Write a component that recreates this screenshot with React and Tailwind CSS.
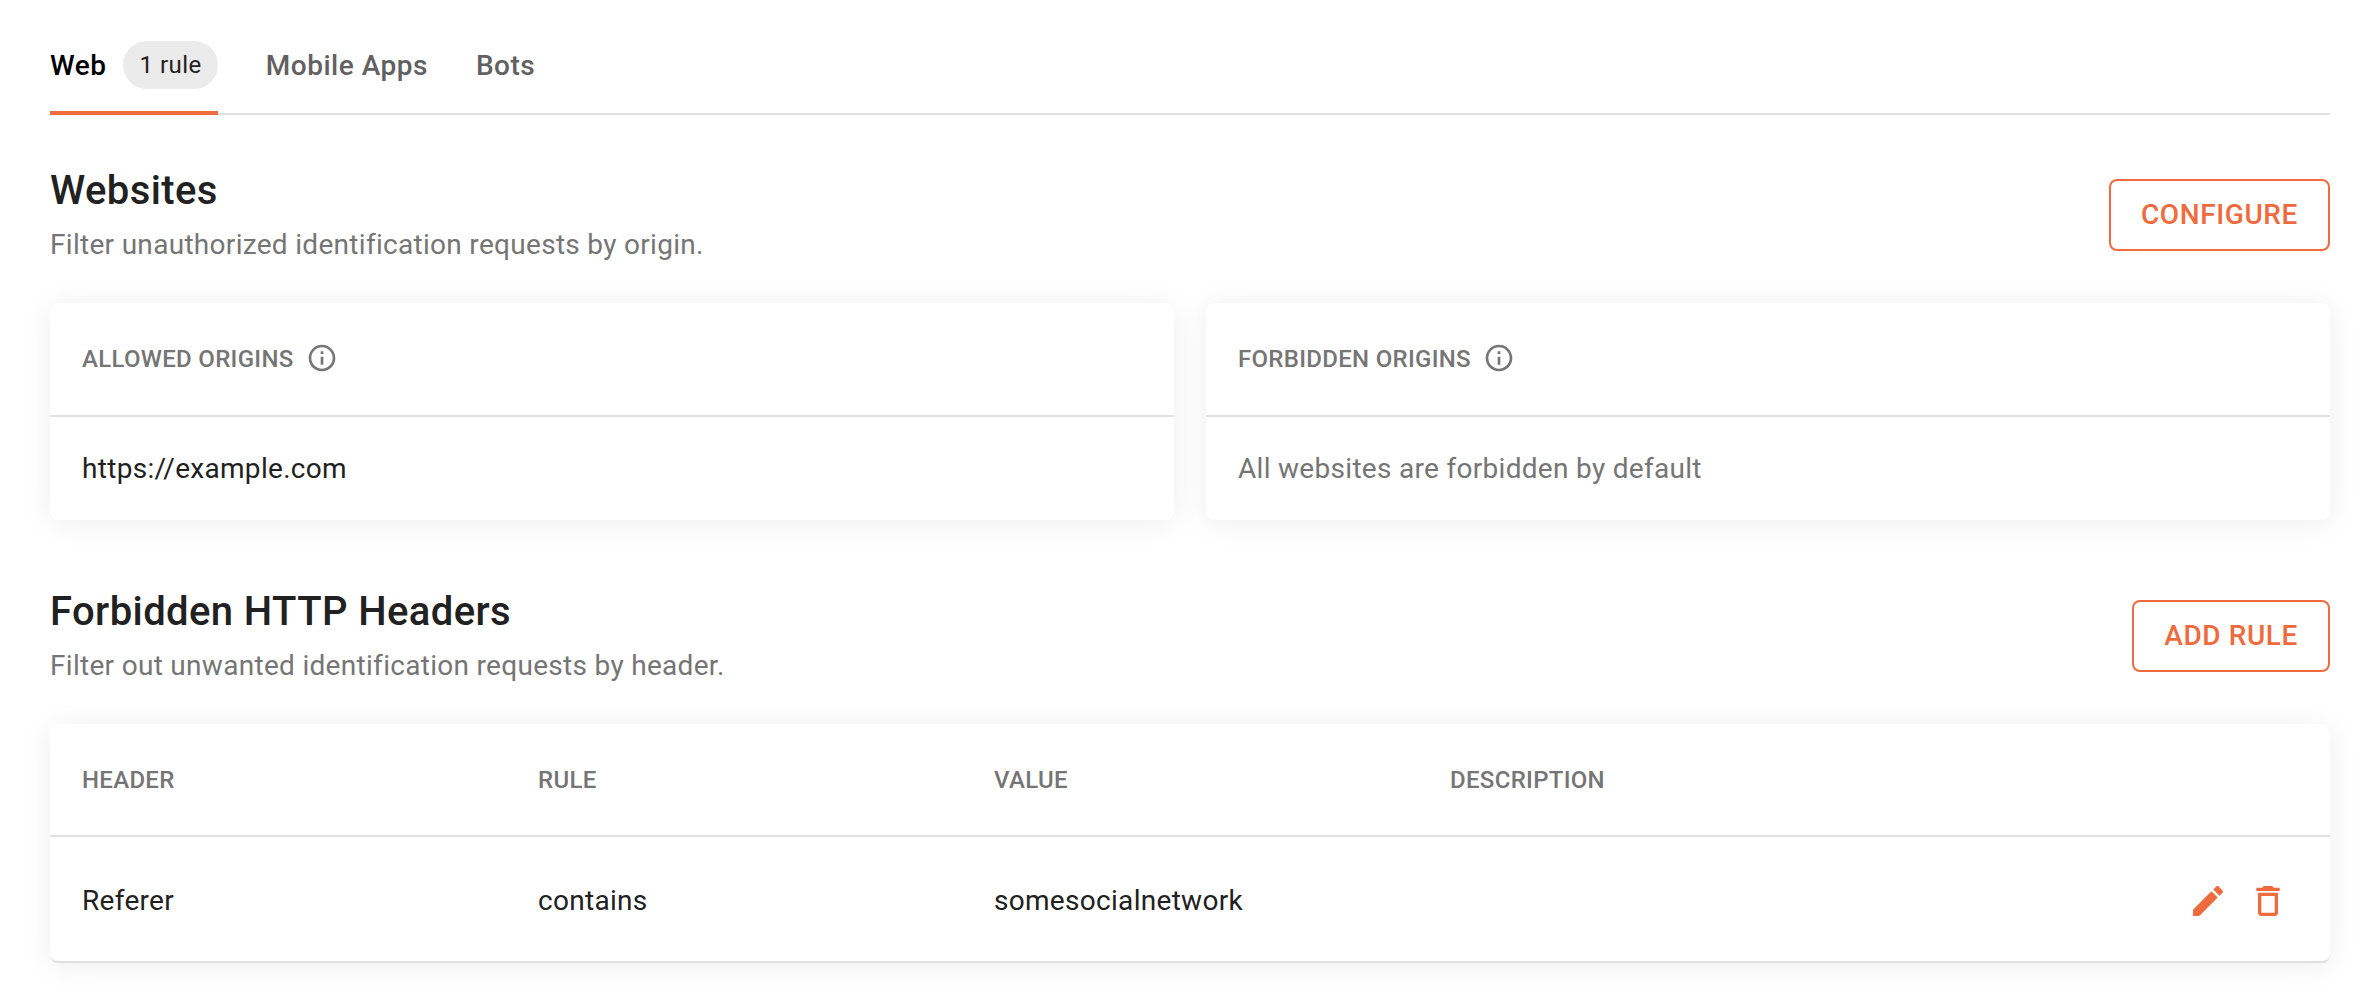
const PencilIcon = () => (
  <svg viewBox="0 0 24 24" className="w-10 h-10 fill-[#ef6a3c]">
    <path d="M3 17.25V21h3.75L17.81 9.94l-3.75-3.75L3 17.25zM20.71 7.04c.39-.39.39-1.02 0-1.41l-2.34-2.34c-.39-.39-1.02-.39-1.41 0l-1.83 1.83 3.75 3.75 1.83-1.83z" />
  </svg>
);

const TrashIcon = () => (
  <svg viewBox="0 0 24 24" className="w-10 h-10 fill-[#ef6a3c]">
    <path d="M6 19c0 1.1.9 2 2 2h8c1.1 0 2-.9 2-2V7H6v12zM8 9h8v10H8V9zm7.5-5l-1-1h-5l-1 1H5v2h14V4h-3.5z" />
  </svg>
);

const InfoIcon = () => (
  <svg viewBox="0 0 24 24" className="w-[32px] h-[32px] mb-[2px] fill-[#757575]">
    <path d="M11 7h2v2h-2zm0 4h2v6h-2zm1-9C6.48 2 2 6.48 2 12s4.48 10 10 10 10-4.48 10-10S17.52 2 12 2zm0 18c-4.41 0-8-3.59-8-8s3.59-8 8-8 8 3.59 8 8-3.59 8-8 8z" />
  </svg>
);

const OutlineButton = ({ children }) => (
  <button className="h-[72px] px-[30px] border-[2px] border-[#ef6a3c] rounded-[8px] text-[#ef6a3c] text-[28px] font-medium tracking-[0.6px] bg-white">
    {children}
  </button>
);

const SectionHead = ({ title, subtitle, action }) => (
  <div className="flex justify-between items-start">
    <div>
      <h2 className="text-[40px] leading-[48px] font-medium tracking-[0.4px] text-[#212121]">{title}</h2>
      <p className="text-[28px] leading-[40px] mt-[10px] tracking-[0.3px] text-[#757575]">{subtitle}</p>
    </div>
    <div className="mt-[12px]">
      <OutlineButton>{action}</OutlineButton>
    </div>
  </div>
);

const OriginCard = ({ label, value, muted }) => (
  <div className="bg-white rounded-[8px] shadow-[0_3px_30px_rgba(0,0,0,0.07)]">
    <div className="h-[114px] px-[32px] flex items-center gap-[12px] border-b-[2px] border-[#e0e0e0]">
      <span className="text-[24px] font-medium text-[#757575] tracking-[0.3px]">{label}</span>
      <InfoIcon />
    </div>
    <div className="h-[103px] px-[32px] flex items-center text-[28px] tracking-[0.3px]">
      <span className={muted ? "text-[#757575]" : "text-[#212121]"}>{value}</span>
    </div>
  </div>
);

const App = () => {
  return (
    <div className="min-h-[1008px] bg-white px-[50px] pt-[41px] font-['Roboto',sans-serif]">
      {/* tabs */}
      <div className="flex border-b-[2px] border-[#e0e0e0] h-[74px]">
        <div className="flex gap-[17px] h-[74px] border-b-[4px] border-[#ef6a3c]">
          <span className="text-[28px] leading-[50px] font-medium tracking-[0.5px] text-black">Web</span>
          <span className="h-[48px] px-[16px] rounded-full bg-[#ebebeb] text-[24px] leading-[48px] tracking-[0.5px] text-[#212121]">1 rule</span>
        </div>
        <span className="ml-[48px] text-[28px] leading-[50px] font-medium tracking-[0.5px] text-[#616161]">Mobile Apps</span>
        <span className="ml-[48px] text-[28px] leading-[50px] font-medium tracking-[0.5px] text-[#616161]">Bots</span>
      </div>

      <section className="mt-[52px]">
        <SectionHead
          title="Websites"
          subtitle="Filter unauthorized identification requests by origin."
          action="CONFIGURE"
        />
        <div className="grid grid-cols-2 gap-[32px] mt-[38px]">
          <OriginCard label="ALLOWED ORIGINS" value="https://example.com" />
          <OriginCard label="FORBIDDEN ORIGINS" value="All websites are forbidden by default" muted />
        </div>
      </section>

      <section className="mt-[68px]">
        <SectionHead
          title="Forbidden HTTP Headers"
          subtitle="Filter out unwanted identification requests by header."
          action="ADD RULE"
        />
        <div className="mt-[38px] bg-white rounded-[8px] shadow-[0_3px_30px_rgba(0,0,0,0.07)] border-b-[2px] border-[#e0e0e0]">
          <div className="grid grid-cols-[456px_456px_456px_1fr] h-[113px] items-center border-b-[2px] border-[#e0e0e0] text-[24px] font-medium text-[#757575] tracking-[0.3px]">
            <div className="pl-[32px]">HEADER</div>
            <div className="pl-[32px]">RULE</div>
            <div className="pl-[32px]">VALUE</div>
            <div className="pl-[32px]">DESCRIPTION</div>
          </div>
          <div className="grid grid-cols-[456px_456px_456px_1fr] h-[124px] pt-[3px] items-center text-[28px] tracking-[0.3px] text-[#212121]">
            <div className="pl-[32px]">Referer</div>
            <div className="pl-[32px]">contains</div>
            <div className="pl-[32px]">somesocialnetwork</div>
            <div className="flex justify-end gap-[20px] pr-[42px]">
              <PencilIcon />
              <TrashIcon />
            </div>
          </div>
        </div>
      </section>
    </div>
  );
};

export default App;
